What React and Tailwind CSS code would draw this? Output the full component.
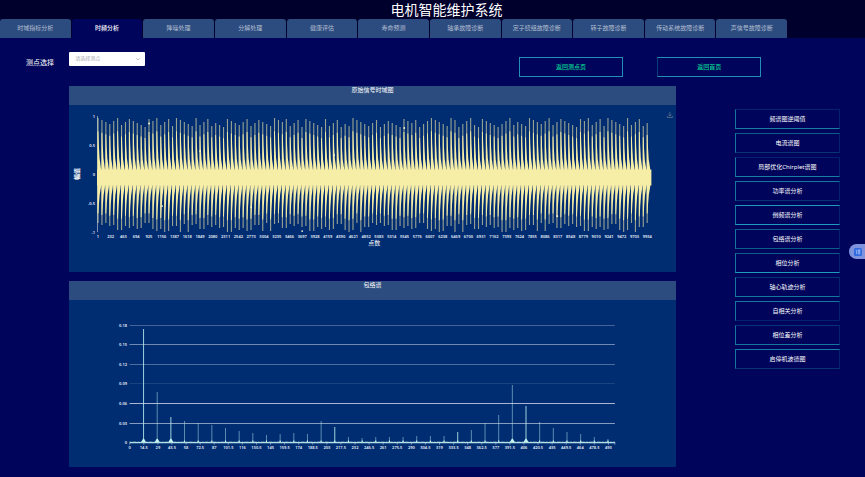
import { useState } from "react";

const tabs = [
  "时域指标分析",
  "时频分析",
  "降噪处理",
  "分解处理",
  "健康评估",
  "寿命预测",
  "轴承故障诊断",
  "定子绕组故障诊断",
  "转子故障诊断",
  "传动系统故障诊断",
  "声信号故障诊断",
];

const analyses = [
  { name: "频谱图逆阈值", edge: "border-t-[#04226c] border-b-[#1680a4]" },
  { name: "电流谱图", edge: "border-t-[#0c5c8c] border-b-[#063474]" },
  { name: "局部优化Chirplet谱图", edge: "border-t-[#04226c] border-b-[#1680a4]" },
  { name: "功率谱分析", edge: "border-t-[#1278a0] border-b-[#063474]" },
  { name: "倒频谱分析", edge: "border-t-[#1e9cc0] border-b-[#1e9cc0]" },
  { name: "包络谱分析", edge: "border-t-[#0c5c8c] border-b-[#0c5c8c]" },
  { name: "相位分析", edge: "border-t-[#0c5c8c] border-b-[#1e9cc0]" },
  { name: "轴心轨迹分析", edge: "border-t-[#063474] border-b-[#1278a0]" },
  { name: "自相关分析", edge: "border-t-[#1278a0] border-b-[#04226c]" },
  { name: "相位差分析", edge: "border-t-[#063474] border-b-[#1278a0]" },
  { name: "启停机波德图", edge: "border-t-[#1680a4] border-b-[#063474]" },
];

// one decaying burst every 3.92 units, heights vary a bit
const bursts = Array.from({ length: 141 }, (_, i) => {
  const up = 13 + ((i * 37 + ((i * i) % 11) * 5) % 10);
  const down = 118 + ((i * 29 + ((i * i) % 7) * 3) % 10);
  return { x: 28.5 + i * 3.92, up, down };
});

const burstPath = bursts
  .map(({ x, up, down }) => {
    const u = 66 - up;
    const d = down - 80;
    return (
      `M${x} 73V${up + u * 0.25}H${x + 0.9}L${x + 1.3} ${up + u * 0.5}L${x + 2} ${up + u * 0.75}L${x + 3.5} 64V73` +
      `V82L${x + 2.2} ${down - d * 0.75}L${x + 1.4} ${down - d * 0.5}L${x + 0.9} ${down - d * 0.25}H${x}Z`
    );
  })
  .join("");

const linePath = bursts.map(({ x, up, down }) => `M${x + 0.5} ${up}V${down}`).join("");

const sparks = [[80, 18.5], [335, 23], [233, 126], [93, 101], [488, 111], [182, 102], [131, 46], [265, 50]];

const TimeChart = () => (
  <svg viewBox="0 0 606 167" className="block w-full" role="img" aria-label="原始信号时域图">
    <path d="M28.5 11V127" stroke="#9fb2cc" strokeWidth="0.8" />
    <path d={linePath} stroke="#f6eea6" strokeOpacity="0.62" strokeWidth="1.1" />
    <path d={burstPath} fill="#f6eea6" />
    <rect x="28" y="64.5" width="554" height="16" fill="#f6eea6" />
    {sparks.map(([x, y]) => (
      <circle key={x} cx={x} cy={y} r="0.9" fill="#fffbd0" />
    ))}
    <g fill="#e6edf6" fontSize="4" fontWeight="600">
      {["1", "0.5", "0", "-0.5", "-1"].map((t, i) => (
        <text key={t} x="26" y={12.5 + i * 29} textAnchor="end">{t}</text>
      ))}
      {Array.from({ length: 44 }, (_, i) => (
        <text key={i} x={28.8 + i * 12.77} y="133" textAnchor="middle">{1 + i * 231}</text>
      ))}
    </g>
    <text x="305" y="140" textAnchor="middle" fontSize="6" fill="#fff">点数</text>
    <text transform="translate(10 69) rotate(-90)" textAnchor="middle" fontSize="6" fontWeight="700" fill="#fff">幅值</text>
    <path d="M600.5 7V11M598.8 9.5L600.5 11.2L602.2 9.5M598 11V12.5H603V11" fill="none" stroke="#56698a" strokeWidth="0.9" />
  </svg>
);

const peaks = [
  28, 91, 116, 120, 122, 124, 127, 130, 132, 134, 133, 132, 133, 120, 126, 136, 137, 136,
  136, 136, 135, 135, 135, 131, 129, 122, 114, 84, 105, 121, 127, 131, 133, 136, 138,
];
const strong = [0, 2, 14, 23, 28];
const grid = [
  ["0.18", 24.5, 0.3],
  ["0.15", 43.5, 0.5],
  ["0.12", 63.5, 0.35],
  ["0.09", 82.5, 0.12],
  ["0.06", 102.5, 0.75],
  ["0.03", 122.5, 0.6],
  ["0", 141.5, 0],
];

const SpectrumChart = () => (
  <svg viewBox="0 -1 606 167" className="block w-full" role="img" aria-label="包络谱">
    {grid.map(([t, y, o]) => (
      <path key={t} d={`M60.5 ${y}H545.5`} stroke="#e0e6f1" strokeOpacity={o} strokeWidth="1" />
    ))}
    {peaks.map((y, i) => (
      <path
        key={i}
        d={`M${74.5 + i * 13.65} ${y}V141`}
        stroke="#b4f0ee"
        strokeOpacity={strong.includes(i) ? 0.85 : 0.5}
        strokeWidth="1"
      />
    ))}
    {peaks.map((y, i) => {
      const x = 74.5 + i * 13.65;
      const w = [0, 1, 2, 27, 28].includes(i) ? 2.4 : 0.6;
      return <path key={i} d={`M${x - w} 141L${x - 0.5} ${140 - w}H${x + 0.5}L${x + w} 141Z`} fill="#c8f6f2" />;
    })}
    <path d="M60.5 141.5H545.5" stroke="#b2e2e6" strokeWidth="1.4" />
    <path d="M60.5 140.6H545.5" stroke="#b2e2e6" strokeOpacity="0.6" strokeWidth="0.6" strokeDasharray="2 1 4 1" />
    <path
      d={Array.from({ length: 35 }, (_, i) => `M${60.7 + i * 14.07} 142V143.5`).join("") + "M545.5 141V143.5"}
      stroke="#9db8d4"
      strokeWidth="0.8"
    />
    <g fill="#e6edf6" fontSize="4" fontWeight="600">
      {grid.map(([t, y]) => (
        <text key={t} x="58" y={y + 1} textAnchor="end">{t}</text>
      ))}
      {Array.from({ length: 35 }, (_, i) => (
        <text key={i} x={60.7 + i * 14.07} y="148" textAnchor="middle">{i * 14.5}</text>
      ))}
    </g>
  </svg>
);

const Panel = ({ title, children }) => (
  <section className="bg-[#002c72]">
    <h2 className="h-[19px] bg-[#2c4c80] text-center text-[6px] leading-[9px] text-white">{title}</h2>
    {children}
  </section>
);

const App = () => {
  const [active, setActive] = useState("时频分析");

  return (
    <div className="relative min-h-screen bg-[#00045a] pb-2 font-['Noto_Sans','Noto_Sans_CJK_SC',sans-serif] text-white">
      <header className="bg-[#00002c]">
        <h1 className="pl-7 text-center text-[14px] leading-[19px]">电机智能维护系统</h1>
        <nav className="grid w-[91%] grid-cols-11 gap-px">
          {tabs.map((t) => (
            <button
              key={t}
              onClick={() => setActive(t)}
              className={
                active === t
                  ? "h-[19px] rounded-t-[3px] bg-[#00045a] text-[6px] font-medium whitespace-nowrap text-white"
                  : "h-[19px] rounded-t-[3px] bg-[#2c4c80] text-[6px] whitespace-nowrap text-[#b4bfd0]"
              }
            >
              {t}
            </button>
          ))}
        </nav>
      </header>

      <div className="flex h-12 items-start pt-[14px]">
        <label htmlFor="point" className="w-[8%] pt-1 pl-[3%] text-[7px] leading-[14px] whitespace-nowrap">
          测点选择
        </label>
        <div className="relative w-[52%]">
          <select
            id="point"
            defaultValue=""
            className="block h-[14px] w-[76px] appearance-none rounded-[1px] bg-white px-[6px] text-[5px] text-[#a8abb2]"
          >
            <option value="">请选择测点</option>
          </select>
          <svg viewBox="0 0 6 6" className="pointer-events-none absolute top-1 left-[66px] size-[6px]">
            <path d="M1.2 2.2L3 4L4.8 2.2" fill="none" stroke="#b4b8c0" strokeWidth="0.8" />
          </svg>
        </div>
        <button className="mt-[5px] mr-[4%] h-5 w-[12%] border border-[#2090b8] text-[6px] font-medium text-[#00d896]">
          返回测点页
        </button>
        <button className="mt-[5px] h-5 w-[12%] border border-[#2090b8] border-l-[#0a3c78] text-[6px] font-medium text-[#00d896]">
          返回首页
        </button>
      </div>

      <main className="flex items-start pl-[8%]">
        <div className="flex w-[76.2%] flex-col gap-[9px]">
          <Panel title="原始信号时域图">
            <TimeChart />
          </Panel>
          <Panel title="包络谱">
            <SpectrumChart />
          </Panel>
        </div>
        <div className="ml-[7.5%] flex w-[13.1%] flex-col gap-1 pt-[23px]">
          {analyses.map((a) => (
            <button
              key={a.name}
              className={`h-5 border border-r-[#04226c] border-l-[#1278a0] text-[6px] whitespace-nowrap ${a.edge}`}
            >
              {a.name}
            </button>
          ))}
        </div>
      </main>

      <button
        aria-label="翻译"
        className="absolute top-[244px] right-0 flex h-[15px] w-4 items-center rounded-l-full bg-[#7f92dc] pl-[5px]"
      >
        <svg viewBox="0 0 8 8" className="size-2">
          <rect width="8" height="8" rx="1.5" fill="#2f6ae0" />
          <path d="M1.6 2.2H2.6V5.8L3.4 5.2M3.6 2H6.4L3.8 4M4 2.4L6.5 4M3.8 5H6.4M5.1 4V6.8" fill="none" stroke="#c4d4ff" strokeWidth="0.6" />
        </svg>
      </button>
    </div>
  );
};

export default App;
